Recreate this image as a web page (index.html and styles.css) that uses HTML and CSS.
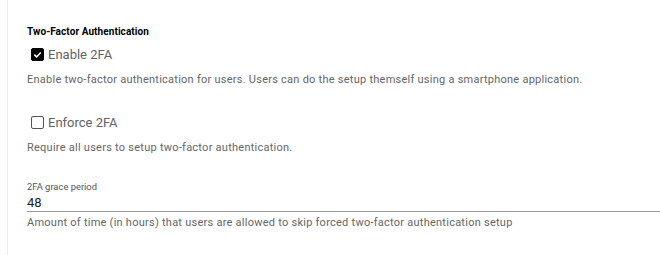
FILE: index.html
```html
<!DOCTYPE html>
<html>
<head>
<meta charset="utf-8">
<link rel="stylesheet" href="styles.css">
</head>
<body>
<div class="panel">
  <section class="section">
    <h3 class="title">Two-Factor Authentication</h3>
    <label class="check">
      <span class="box checked">
        <svg viewBox="0 0 14 14" width="13" height="13"><path d="M3 7.2 L5.8 10 L11.2 4.4" fill="none" stroke="#fff" stroke-width="2"/></svg>
      </span>
      <span class="check-label">Enable 2FA</span>
    </label>
    <p class="hint first">Enable two-factor authentication for users. Users can do the setup themself using a smartphone application.</p>
    <label class="check second">
      <span class="box"></span>
      <span class="check-label">Enforce 2FA</span>
    </label>
    <p class="hint first">Require all users to setup two-factor authentication.</p>
    <div class="field">
      <div class="field-label">2FA grace period</div>
      <div class="field-value">48</div>
    </div>
    <p class="hint last">Amount of time (in hours) that users are allowed to skip forced two-factor authentication setup</p>
  </section>
</div>
</body>
</html>
```
FILE: styles.css
```css
html, body {
  margin: 0;
  padding: 0;
  background: #fff;
}
body {
  font-family: Roboto, "Liberation Sans", sans-serif;
  width: 660px;
  height: 255px;
  overflow: hidden;
}
.panel {
  margin-left: 7px;
  border-left: 1px solid #eeeeee;
  height: 255px;
  padding-left: 19px;
  padding-top: 26px;
  box-sizing: border-box;
}
.title {
  margin: 0;
  font-size: 10px;
  font-weight: 700;
  letter-spacing: 0.08px;
  color: #000;
  line-height: 12px;
}
.check {
  display: flex;
  align-items: center;
  margin-top: 9px;
  margin-left: 4px;
  height: 14px;
}
.check.second {
  margin-top: 29px;
}
.box {
  width: 13px;
  height: 13px;
  box-sizing: border-box;
  border: 1.5px solid #555;
  border-radius: 2px;
  display: flex;
  align-items: center;
  justify-content: center;
}
.box.checked {
  background: #000;
  border-color: #000;
}
.check-label {
  margin-left: 4px;
  font-size: 13px;
  color: #636363;
}
.hint {
  margin: 0;
  font-size: 11px;
  letter-spacing: 0.25px;
  color: #666;
  line-height: 13px;
}
.hint.first {
  margin-top: 12px;
}
.field {
  margin-top: 28px;
  border-bottom: 1px solid #999;
}
.field-label {
  font-size: 9.4px;
  color: #555;
  line-height: 10px;
}
.field-value {
  font-size: 13px;
  color: #222;
  line-height: 16px;
  margin-top: 3px;
}
.hint.last {
  margin-top: 4px;
}
```
